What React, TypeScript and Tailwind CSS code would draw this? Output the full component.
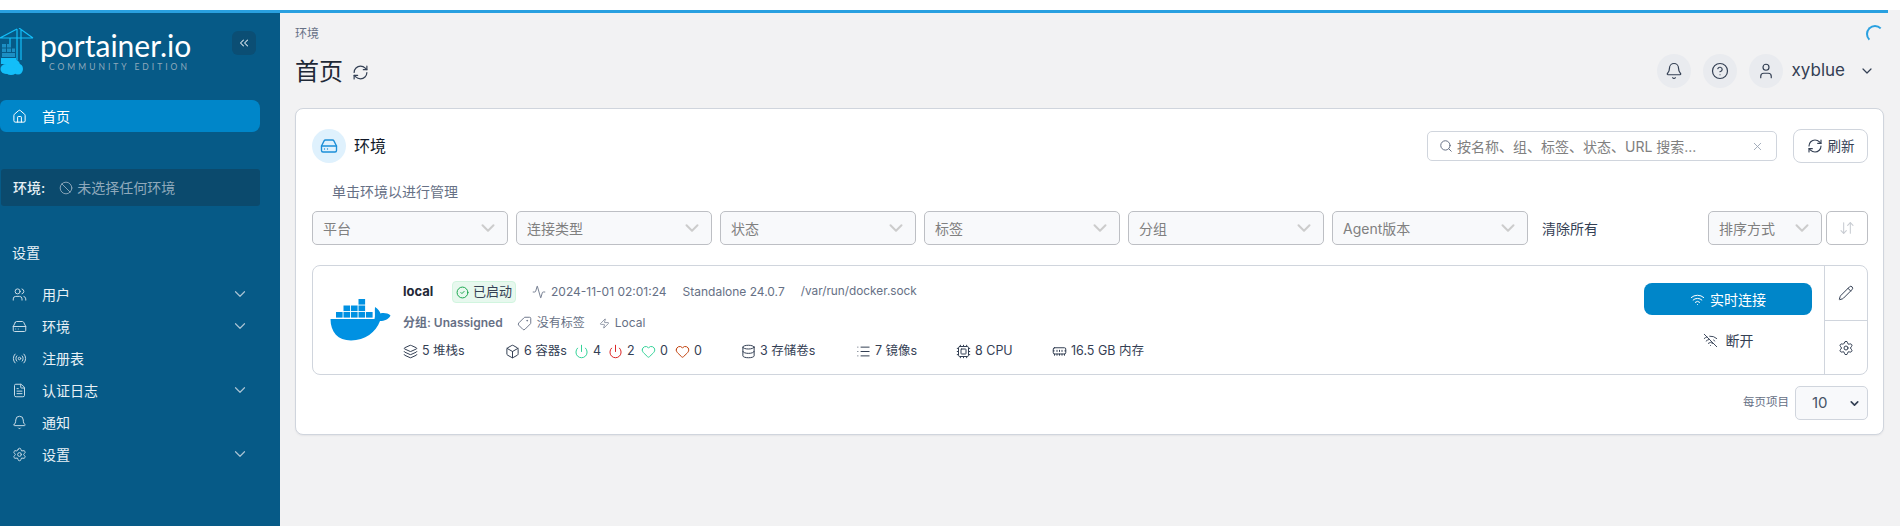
import React from "react";
import {
  House, Users, HardDrive, Radio, FileText, Bell, Settings, ChevronDown, Ban, ChevronsLeft,
  RefreshCw, CircleHelp, User, Search, X, Activity, Tag, Zap, Layers, Box, Power, Heart,
  Database, List, Cpu, MemoryStick, Wifi, WifiOff, Pencil, ArrowDownUp, CircleCheck,
} from "lucide-react";

const font = "font-['Inter','Noto_Sans_CJK_SC',sans-serif]";

function Logo() {
  return (
    <svg width="34" height="48" viewBox="0 0 34 48" className="shrink-0">
      <g stroke="#13bef9" strokeWidth="1.2" fill="none">
        <path d="M0 10H33M17 1V32M21 1V32M17 1L0 10M19 0L33 10" />
        <path d="M10 10V16" />
      </g>
      <g fill="#1c8fc4">
        <rect x="2" y="16" width="4" height="3.5" />
        <rect x="7" y="16" width="4" height="3.5" />
        <rect x="2" y="20.5" width="4" height="3.5" />
        <rect x="7" y="20.5" width="4" height="3.5" />
        <rect x="12" y="20.5" width="3" height="3.5" />
        <rect x="2" y="25" width="13" height="4" />
      </g>
      <path d="M1 30H16V36H1Z" fill="#13bef9" />
      <ellipse cx="6" cy="41" rx="5.5" ry="5" fill="#13bef9" />
      <ellipse cx="13" cy="37" rx="7" ry="6" fill="#13bef9" />
      <ellipse cx="18" cy="41" rx="5" ry="5.5" fill="#13bef9" />
      <ellipse cx="11" cy="43" rx="6" ry="4" fill="#13bef9" />
    </svg>
  );
}

function Docker() {
  const cells = [
    [0, 12], [7.5, 12], [15, 12], [22.5, 12], [30, 12],
    [7.5, 5.5], [15, 5.5], [22.5, 5.5],
    [22.5, -1],
  ];
  return (
    <svg width="61" height="46" viewBox="0 0 61 46" className="shrink-0">
      <g transform="translate(6 2)" fill="#0091e2">
        {cells.map(([x, y], i) => (
          <rect key={i} x={x} y={y + 2} width="6.6" height="5.6" />
        ))}
      </g>
      <path
        d="M0.5 23H44.5C45.5 20 44.5 15.5 45 11C48 13 50 15.5 50.5 17.5C53 16.5 58 17 60.5 19.5C58.5 23.5 54.5 25 50 25C46 36 35 44.5 21 44.5C8 44.5 0.5 36 0.5 23Z"
        fill="#0091e2"
      />
    </svg>
  );
}

function NavRow({ icon: Icon, label, chevron }: { icon: React.ElementType; label: string; chevron?: boolean }) {
  return (
    <div className="flex h-8 items-center pl-3 pr-[31px] text-[#e8f1f6]">
      <Icon size={15} strokeWidth={1.6} className="mr-[15px] shrink-0 text-[#c9dbe6]" />
      <span className="flex-1 text-[14px]">{label}</span>
      {chevron && <ChevronDown size={18} strokeWidth={1.6} className="text-[#a9c3d3]" />}
    </div>
  );
}

function Sidebar() {
  return (
    <aside className="flex w-[280px] shrink-0 flex-col bg-[#065a87]">
      <div className="flex h-[90px] items-start pt-[18px]">
        <Logo />
        <div className="ml-[6px] mt-[2px] flex w-[150px] flex-col">
          <span className="font-['Lato',sans-serif] text-[30px] leading-[30px] text-white">portainer.io</span>
          <span className="mt-[2px] whitespace-nowrap pl-[9px] font-['Lato',sans-serif] text-[8.5px] leading-[10px] tracking-[3px] text-[#8fa9bb]">
            COMMUNITY EDITION
          </span>
        </div>
        <button className="ml-[42px] mt-[3px] flex h-6 w-6 items-center justify-center rounded-md bg-[#0b4e74] text-[#d5e2ea]">
          <ChevronsLeft size={14} strokeWidth={1.8} />
        </button>
      </div>
      <div className="flex h-8 w-[260px] items-center rounded-r-lg rounded-l-md bg-[#0086c9] pl-3 text-white">
        <House size={15} strokeWidth={1.6} className="mr-[15px]" />
        <span className="text-[14px]">首页</span>
      </div>
      <div className="ml-px mt-[37px] flex h-[37px] w-[259px] items-center rounded-[3px] bg-[#0b4a6d] pl-3 text-[14px]">
        <span className="mr-[14px] font-medium text-[#e8f1f6]">环境:</span>
        <Ban size={14} strokeWidth={1.6} className="mr-1 text-[#8fa9bb]" />
        <span className="text-[#8fa9bb]">未选择任何环境</span>
      </div>
      <div className="mb-[15px] mt-[37px] pl-3 text-[14px] leading-5 text-[#e8f1f6]">设置</div>
      <NavRow icon={Users} label="用户" chevron />
      <NavRow icon={HardDrive} label="环境" chevron />
      <NavRow icon={Radio} label="注册表" />
      <NavRow icon={FileText} label="认证日志" chevron />
      <NavRow icon={Bell} label="通知" />
      <NavRow icon={Settings} label="设置" chevron />
    </aside>
  );
}

function Round({ icon: Icon }: { icon: React.ElementType }) {
  return (
    <div className="flex h-[34px] w-[34px] items-center justify-center rounded-full bg-[#e9ebef] text-[#344054]">
      <Icon size={18} strokeWidth={1.6} />
    </div>
  );
}

function Filter({ label, w = "w-[196px]" }: { label: string; w?: string }) {
  return (
    <div className={`flex h-[34px] ${w} items-center justify-between rounded-[5px] border border-[#bdbfc4] bg-[#f8f9fb] pl-[10px] pr-[8px] text-[14px] text-[#808080]`}>
      <span>{label}</span>
      <ChevronDown size={22} strokeWidth={2.2} className="text-[#cccccc]" />
    </div>
  );
}

function Stat({ icon: Icon, text, className = "", iconClass = "text-[#344054]" }: { icon: React.ElementType; text: string; className?: string; iconClass?: string }) {
  return (
    <span className={`flex items-center gap-1 ${className}`}>
      <Icon size={15} strokeWidth={1.6} className={iconClass} />
      <span>{text}</span>
    </span>
  );
}

function EnvItem() {
  return (
    <div className="flex h-[110px] w-[1556px] rounded-lg border border-[#d0d5dd]">
      <div className="flex min-w-0 flex-1 pl-[17px]">
        <div className="flex items-center pb-[2px]">
          <Docker />
        </div>
        <div className="ml-3 flex flex-col pt-[15px] text-[12px] text-[#667085]">
          <div className="flex h-[22px] items-center">
            <span className="w-[49px] text-[13px] font-bold text-[#1f2937]">local</span>
            <span className="flex h-[22px] w-[64px] items-center justify-center gap-1 rounded-[4px] border border-[#d1f5df] bg-[#e7f8ee] text-[13px] text-[#344054]">
              <CircleCheck size={13} strokeWidth={1.8} className="text-[#16a34a]" />
              已启动
            </span>
            <span className="ml-4 flex items-center gap-[5px]">
              <Activity size={14} strokeWidth={1.5} />
              2024-11-01 02:01:24
            </span>
            <span className="ml-4">Standalone 24.0.7</span>
            <span className="ml-[16px] text-[11.8px]">/var/run/docker.sock</span>
          </div>
          <div className="mt-[10px] flex h-5 items-center">
            <span className="font-semibold">分组: Unassigned</span>
            <Tag size={15} strokeWidth={1.5} className="ml-[14px] mr-[5px] -scale-x-100" />
            <span>没有标签</span>
            <Zap size={11} strokeWidth={1.5} className="ml-[14px] mr-[5px]" />
            <span>Local</span>
          </div>
          <div className="mt-2 flex h-5 items-center text-[12.5px] text-[#344054]">
            <Stat icon={Layers} text="5 堆栈s" className="w-[102px]" />
            <Stat icon={Box} text="6 容器s" className="w-[69px]" />
            <Stat icon={Power} text="4" className="w-[34px]" iconClass="text-[#34d399]" />
            <Stat icon={Power} text="2" className="w-[33px]" iconClass="text-[#dc2626]" />
            <Stat icon={Heart} text="0" className="w-[34px]" iconClass="text-[#34d399]" />
            <Stat icon={Heart} text="0" className="w-[66px]" iconClass="text-[#c2410c]" />
            <Stat icon={Database} text="3 存储卷s" className="w-[115px]" />
            <Stat icon={List} text="7 镜像s" className="w-[100px]" />
            <Stat icon={Cpu} text="8 CPU" className="w-[96px]" />
            <Stat icon={MemoryStick} text="16.5 GB 内存" />
          </div>
        </div>
      </div>
      <div className="flex w-[168px] shrink-0 flex-col items-center pt-[18px]">
        <div className="flex h-8 w-[168px] -translate-y-px items-center justify-center gap-[5px] rounded-lg bg-[#0086c9] text-[14px] text-white">
          <Wifi size={15} strokeWidth={1.6} />
          实时连接
        </div>
        <div className="mt-3 flex h-6 items-center gap-[8px] text-[14px] text-[#344054]">
          <WifiOff size={15} strokeWidth={1.5} />
          断开
        </div>
      </div>
      <div className="ml-3 flex w-[43px] shrink-0 flex-col border-l border-[#d0d5dd] text-[#344054]">
        <div className="flex h-[55px] items-center justify-center border-b border-[#d0d5dd]">
          <Pencil size={16} strokeWidth={1.5} />
        </div>
        <div className="flex flex-1 items-center justify-center">
          <Settings size={16} strokeWidth={1.5} />
        </div>
      </div>
    </div>
  );
}

function Content() {
  return (
    <main className="flex min-w-0 flex-1 flex-col bg-[#f2f2f3] pl-[15px] pr-4">
      <div className="mt-[14px] h-5 text-[12px] leading-5 text-[#667085]">环境</div>
      <div className="flex h-[64px] items-start justify-between">
        <div className="mt-[10px] flex h-9 items-center gap-[9px] text-[24px] text-[#1f2937]">
          首页
          <RefreshCw size={17} strokeWidth={1.7} className="text-[#344054]" />
        </div>
        <div className="relative mt-[10px] flex items-center gap-3 pr-[9px]">
          <Round icon={Bell} />
          <Round icon={CircleHelp} />
          <Round icon={User} />
          <span className="-ml-[3px] text-[17px] text-[#344054]">xyblue</span>
          <ChevronDown size={16} strokeWidth={1.8} className="ml-[2px] text-[#344054]" />
        </div>
      </div>
      <div className="h-[327px] rounded-lg border border-[#d0d5dd] bg-white pl-4 pr-[15px] shadow-[0_1px_2px_rgba(16,24,40,0.06)]">
        <div className="mt-5 flex h-[34px] items-center">
          <div className="flex h-[34px] w-[34px] items-center justify-center rounded-full bg-[#dff1fd] text-[#1d8fd8]">
            <HardDrive size={18} strokeWidth={1.8} />
          </div>
          <span className="ml-2 flex-1 text-[16px] text-[#101828]">环境</span>
          <div className="flex h-[30px] w-[350px] items-center rounded-[5px] border border-[#d0d5dd] pl-[11px] pr-[12px] text-[14px] text-[#808080]">
            <Search size={14} strokeWidth={1.7} className="mr-1 text-[#667085]" />
            <span className="flex-1">按名称、组、标签、状态、URL 搜索...</span>
            <X size={13} strokeWidth={1.6} className="text-[#98a2b3]" />
          </div>
          <div className="ml-4 flex h-[34px] w-[75px] items-center justify-center gap-[5px] rounded-lg border border-[#d0d5dd] text-[13.5px] text-[#344054]">
            <RefreshCw size={16} strokeWidth={1.7} />
            刷新
          </div>
        </div>
        <div className="ml-5 mt-[19px] h-[29px] text-[14px] leading-[20px] text-[#667085]">单击环境以进行管理</div>
        <div className="flex items-center">
          <div className="flex gap-2">
            <Filter label="平台" />
            <Filter label="连接类型" />
            <Filter label="状态" />
            <Filter label="标签" />
            <Filter label="分组" />
            <Filter label="Agent版本" />
          </div>
          <span className="ml-[14px] flex-1 text-[14px] text-[#344054]">清除所有</span>
          <Filter label="排序方式" w="w-[114px]" />
          <div className="ml-1 flex h-[34px] w-[42px] items-center justify-center rounded-[5px] border border-[#bdbfc4] text-[#c8ccd2]">
            <ArrowDownUp size={16} strokeWidth={1.6} />
          </div>
        </div>
        <div className="mt-5">
          <EnvItem />
        </div>
        <div className="mt-[11px] flex items-center justify-end">
          <span className="mr-[6px] text-[11.5px] text-[#667085]">每页项目</span>
          <div className="flex h-[34px] w-[73px] items-center justify-between rounded-[5px] border border-[#d0d5dd] bg-[#f8f9fb] pl-4 pr-[6px] text-[15px] text-[#475467]">
            10
            <ChevronDown size={13} strokeWidth={3} className="text-[#344054]" />
          </div>
        </div>
      </div>
    </main>
  );
}

export default function App() {
  return (
    <div className={`relative flex h-screen flex-col overflow-hidden bg-white ${font}`}>
      <div className="h-[10px] shrink-0 bg-white" />
      <div className="absolute left-0 top-[10px] z-10 h-[3px] w-[1888px] bg-[#29a0e0]" />
      <div className="absolute right-[16px] top-[25px] z-10 h-[18px] w-[18px] rounded-full border-2 border-transparent border-l-[#29a0e0] border-t-[#29a0e0]" />
      <div className="flex min-h-0 flex-1">
        <Sidebar />
        <Content />
      </div>
    </div>
  );
}
